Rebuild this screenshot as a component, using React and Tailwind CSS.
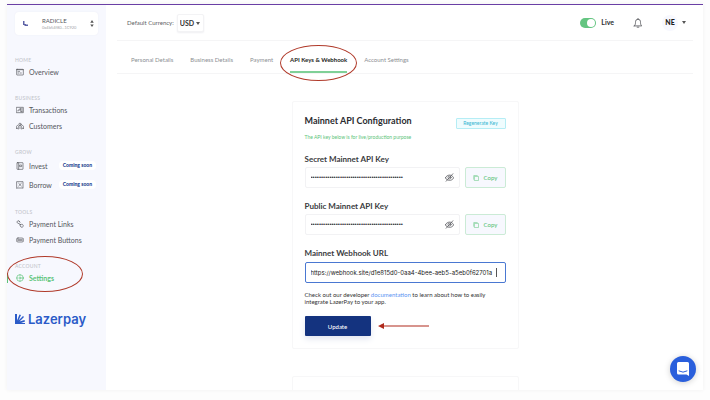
import React from "react";

const DOTS = "•".repeat(44);

function Glyph({ children, className = "h-2 w-2" }) {
  return (
    <svg
      viewBox="0 0 24 24"
      fill="none"
      stroke="currentColor"
      strokeWidth="2"
      strokeLinecap="round"
      strokeLinejoin="round"
      aria-hidden="true"
      className={`shrink-0 ${className}`}
    >
      {children}
    </svg>
  );
}

const icons = {
  overview: (
    <>
      <rect x="2" y="4" width="20" height="17" rx="1" />
      <path d="M2 5h20M6 10h5M6 15h3M13 15h3" />
    </>
  ),
  transactions: (
    <>
      <path d="M2 4h20v16H2zM18 7v10M6 15v-3h6V8" />
      <path d="M14 7v10h4" />
    </>
  ),
  customers: (
    <>
      <circle cx="12" cy="7" r="3.5" />
      <path d="M7 21v-5c0-3 2-5 5-5s5 2 5 5v5M1 19v-4c0-3 2-5 5-5M23 19v-4c0-3-2-5-5-5M1 19h4M19 19h4M12 15v5" />
    </>
  ),
  invest: (
    <>
      <rect x="3" y="2" width="18" height="20" rx="1" />
      <path d="M8 2v20M12 9h5v5h-5z" />
    </>
  ),
  borrow: (
    <>
      <path d="M3 2h18v20l-3-2-3 2-3-2-3 2-3-2-3 2z" />
      <path d="M8 7l8 8M16 7l-8 8" />
    </>
  ),
  links: (
    <>
      <path d="M11 5a4 4 0 1 0-5 5l3 1M9 3l3 4" />
      <path d="M13 14l3-1a4.500 4.500 0 1 1-3 6zM10 12l4 2" />
    </>
  ),
  buttons: (
    <>
      <rect x="1" y="6" width="22" height="12" rx="5" />
      <path d="M6 12h12M6 10v4M12 10v4M18 10v4" />
    </>
  ),
  settings: (
    <>
      <circle cx="12" cy="12" r="10" />
      <circle cx="12" cy="12" r="3" />
      <path d="M12 2v3M12 19v3M2 12h3M19 12h3" />
    </>
  ),
};

function Oval({ className }) {
  return (
    <span
      aria-hidden="true"
      className={`pointer-events-none absolute rounded-[50%] border border-[#b03a2a] ${className}`}
    />
  );
}

function NavGroup({ title, children }) {
  return (
    <section className="relative">
      <h2 className="px-2 text-[5px] leading-2 font-medium tracking-wider text-[#c3c5cb]">
        {title}
      </h2>
      <ul>{children}</ul>
    </section>
  );
}

function NavItem({ icon, label, soon, active }) {
  return (
    <li className={`flex items-center justify-between pr-[10px] ${soon ? "h-[19px]" : "h-4"}`}>
      <a
        href="#"
        className={`flex items-center gap-[5px] border-l py-px pl-2 text-[7px] leading-2 ${
          active ? "border-[#5cc47a] font-bold text-[#5cc47a]" : "border-transparent text-[#54565c]"
        }`}
      >
        <Glyph>{icons[icon]}</Glyph>
        {label}
      </a>
      {soon && (
        <span className="rounded-sm bg-white px-1 text-[5px] leading-[9px] font-black text-[#22408f]">
          Coming soon
        </span>
      )}
    </li>
  );
}

function Sidebar() {
  return (
    <aside className="flex w-[99px] shrink-0 flex-col bg-[#f7f8fe]">
      <button
        type="button"
        className="mx-2 mt-[7px] flex h-[23px] items-center rounded-sm bg-white pr-1 pl-2 text-left shadow-[0_0_2px_#eceef5]"
      >
        <svg viewBox="0 0 10 10" className="h-[5px] w-[5px]" fill="#5d62a6" aria-hidden="true">
          <path d="M0 0h3v6h3v1h4v3H3V8H0z" />
        </svg>
        <span className="ml-[14px] flex-1">
          <span className="block text-[6px] leading-2 text-[#55575d]">RADICLE</span>
          <span className="block text-[4px] leading-[6px] text-[#a3a5aa]">0x4b54f80...1C920</span>
        </span>
        <svg viewBox="0 0 8 16" className="h-[7px] w-1" fill="#555" aria-hidden="true">
          <path d="M4 0l4 6H0zM0 10h8l-4 6z" />
        </svg>
      </button>
      <nav className="mt-[21px] flex flex-col gap-[14px]">
        <NavGroup title="HOME">
          <NavItem icon="overview" label="Overview" />
        </NavGroup>
        <NavGroup title="BUSINESS">
          <NavItem icon="transactions" label="Transactions" />
          <NavItem icon="customers" label="Customers" />
        </NavGroup>
        <NavGroup title="GROW">
          <NavItem icon="invest" label="Invest" soon />
          <NavItem icon="borrow" label="Borrow" soon />
        </NavGroup>
        <NavGroup title="TOOLS">
          <NavItem icon="links" label="Payment Links" />
          <NavItem icon="buttons" label="Payment Buttons" />
        </NavGroup>
        <NavGroup title="ACCOUNT">
          <NavItem icon="settings" label="Settings" active />
          <Oval className="-top-[6px] left-0 h-9 w-[76px]" />
        </NavGroup>
      </nav>
      <div className="mt-[25px] flex items-center gap-[3px] pl-2 text-[#2b5bc8]">
        <svg viewBox="0 0 20 20" className="h-[10px] w-[10px]" fill="currentColor" aria-hidden="true">
          <path d="M0 0h4v13L9 1l3 1-5 11 9-9 2 2-9 9 10-3 1 3-8 3h8v2H0z" />
        </svg>
        <span className="font-['Inter','Liberation_Sans',sans-serif] text-[13px] leading-4 font-semibold">
          Lazerpay
        </span>
      </div>
    </aside>
  );
}

function Header() {
  return (
    <header className="mx-[10px] flex h-9 shrink-0 items-center border-b border-[#f5f5f6] pr-[7px] pl-[10px]">
      <label htmlFor="currency" className="text-[6px] text-[#5e6065]">
        Default Currency:
      </label>
      <div className="relative ml-[3px] flex items-center">
        <select
          id="currency"
          className="block h-[18px] w-[27px] appearance-none rounded-xs border border-[#f3f3f5] bg-white pl-[2px] text-[7px] leading-4 font-bold text-[#333] shadow-[0_1px_2px_#efeff2]"
        >
          <option>USD</option>
        </select>
        <Caret className="pointer-events-none absolute top-2 right-1" />
      </div>
      <label className="ml-auto flex items-center gap-[5px] text-[7px] font-bold text-[#2f3033]">
        <input type="checkbox" defaultChecked className="peer sr-only" />
        <span className="flex h-[10px] w-4 justify-end rounded-full bg-[#64c581] p-px">
          <span className="h-2 w-2 rounded-full bg-white" />
        </span>
        Live
      </label>
      <button type="button" aria-label="Notifications" className="ml-[19px] text-[#55575c]">
        <Glyph className="h-[10px] w-[10px]">
          <path d="M3 19h18c-2-2-3-4-3-8V9a6 6 0 0 0-12 0v2c0 4-1 6-3 8zM10 22h4M12 3V1" />
        </Glyph>
      </button>
      <button type="button" className="ml-[19px] flex items-center gap-1 text-[7px] font-black text-[#1d1e21]">
        <span className="flex h-4 w-4 items-center justify-center rounded-full bg-[#f7f8fe]">NE</span>
        <Caret />
      </button>
    </header>
  );
}

function Caret({ className = "" }) {
  return (
    <svg viewBox="0 0 8 6" className={`h-[3px] w-1 ${className}`} fill="#555" aria-hidden="true">
      <path d="M0 0h8L4 6z" />
    </svg>
  );
}

const tabs = ["Personal Details", "Business Details", "Payment", "API Keys & Webhook", "Account Settings"];

function Tabs() {
  return (
    <nav className="mx-[10px] flex h-[33px] shrink-0 gap-[17px] border-b border-[#f5f5f6] px-[14px]">
      {tabs.map((tab) =>
        tab.startsWith("API") ? (
          <div key={tab} className="relative flex">
            <a href="#" className="border-b-2 border-[#7fd097] pt-[15px] text-[6px] leading-2 font-bold text-[#1d1e21]">
              {tab}
            </a>
            <Oval className="-inset-x-[10px] top-1 h-9" />
          </div>
        ) : (
          <a key={tab} href="#" className="pt-[15px] text-[6px] leading-2 text-[#8d8f94]">
            {tab}
          </a>
        )
      )}
    </nav>
  );
}

function KeyField({ id, label }) {
  return (
    <div>
      <label htmlFor={id} className="block text-[8px] leading-[10px] font-bold text-[#3a3b40]">
        {label}
      </label>
      <div className="mt-[3px] flex gap-[5px]">
        <div className="flex h-[21px] flex-1 items-center rounded-xs border border-[#f2f2f4] pr-[5px] pl-[5px]">
          <input
            id={id}
            readOnly
            type="text"
            value={DOTS}
            className="min-w-0 flex-1 font-['Liberation_Sans',sans-serif] text-[6px] text-[#333]"
          />
          <button type="button" aria-label="Show key" className="text-[#55575c]">
            <Glyph className="h-[9px] w-[9px]">
              <path d="M1 13c4-10 18-10 22 0-4 9-18 9-22 0zM21 2L3 22" />
              <circle cx="12" cy="12" r="4" />
            </Glyph>
          </button>
        </div>
        <button
          type="button"
          className="flex w-[41px] items-center justify-center gap-[5px] rounded-xs border border-[#cbebd6] bg-[#f7f8fe] text-[6px] font-medium text-[#5cc47a]"
        >
          <Glyph className="h-[6px] w-[6px]">
            <path d="M7 6h15v16H7zM3 17V2h14" />
          </Glyph>
          Copy
        </button>
      </div>
    </div>
  );
}

function ConfigCard() {
  return (
    <section className="w-[227px] shrink-0 rounded-xs border border-[#f7f7f8] px-3 pt-3 pb-3">
      <div className="flex items-start justify-between">
        <h1 className="text-[9px] leading-[14px] font-bold text-[#2b2c30]">Mainnet API Configuration</h1>
        <button
          type="button"
          className="mt-1 h-[11px] w-[50px] rounded-[1px] border border-[#b5edf5] bg-[#effcfe] text-[5px] leading-none font-medium text-[#3fb9d3]"
        >
          Regenerate Key
        </button>
      </div>
      <p className="mt-[3px] text-[5px] leading-[10px] text-[#5cc47a]">
        The API key below is for live/production purpose
      </p>
      <div className="mt-3 flex flex-col gap-[13px]">
        <KeyField id="secret" label="Secret Mainnet API Key" />
        <KeyField id="public" label="Public Mainnet API Key" />
        <div>
          <label htmlFor="webhook" className="block text-[8px] leading-[10px] font-bold text-[#3a3b40]">
            Mainnet Webhook URL
          </label>
          <div className="relative mt-1">
            <input
              id="webhook"
              type="text"
              defaultValue="https://webhook.site/d1e815d0-0aa4-4bee-aeb5-a5eb0f62701a"
              className="block h-[21px] w-full rounded-xs border border-[#4a78d2] px-[5px] font-['Inter','Liberation_Sans',sans-serif] text-[6px] text-[#222]"
            />
            <span className="absolute top-[6px] right-[9px] h-[9px] w-px bg-[#555]" />
          </div>
        </div>
      </div>
      <p className="mt-2 text-[6px] leading-[7px] text-[#333]">
        Check out our developer{" "}
        <a href="#" className="text-[#5e94f2]">
          documentation
        </a>{" "}
        to learn about how to easily
        <br />
        integrate LazerPay to your app.
      </p>
      <div className="mt-[11px] flex items-center gap-[7px]">
        <button
          type="button"
          className="h-5 w-[66px] rounded-[1px] bg-[#14337f] text-[6px] font-medium text-white shadow-[0_3px_6px_#e3e6f0]"
        >
          Update
        </button>
        <svg viewBox="0 0 51 6" className="h-[6px] w-[51px]" fill="#b02a1c" aria-hidden="true">
          <path d="M0 3l6-3v2.500h45v1H6V6z" />
        </svg>
      </div>
    </section>
  );
}

export default function App() {
  return (
    <div className="h-screen bg-[#fdfdfd] px-[7px] pt-1 pb-[10px] font-['Lato','Liberation_Sans',sans-serif]">
      <div className="flex h-full overflow-hidden border-t border-[#6a3fa5] bg-white shadow-[0_0_4px_#f1f1f1]">
        <Sidebar />
        <main className="flex min-w-0 flex-1 flex-col pl-px">
          <Header />
          <Tabs />
          <div className="flex min-h-0 flex-1 flex-col items-center gap-[27px] overflow-hidden pt-[27px]">
            <ConfigCard />
            <section className="h-20 w-[227px] shrink-0 rounded-xs border border-[#f7f7f8]" />
          </div>
        </main>
      </div>
      <button
        type="button"
        aria-label="Open chat"
        className="fixed right-[14px] bottom-[18px] flex h-[26px] w-[26px] items-center justify-center rounded-full bg-[#2a5fdc] shadow-[0_1px_6px_#d0d0d0]"
      >
        <svg viewBox="0 0 24 28" className="h-[14px] w-3" aria-hidden="true">
          <path d="M3 0h18q3 0 3 3v25l-5-3H3q-3 0-3-3V3q0-3 3-3z" fill="white" />
          <path d="M4 18q8 5 16 0" fill="none" stroke="#2a5fdc" strokeWidth="2" strokeLinecap="round" />
        </svg>
      </button>
    </div>
  );
}
